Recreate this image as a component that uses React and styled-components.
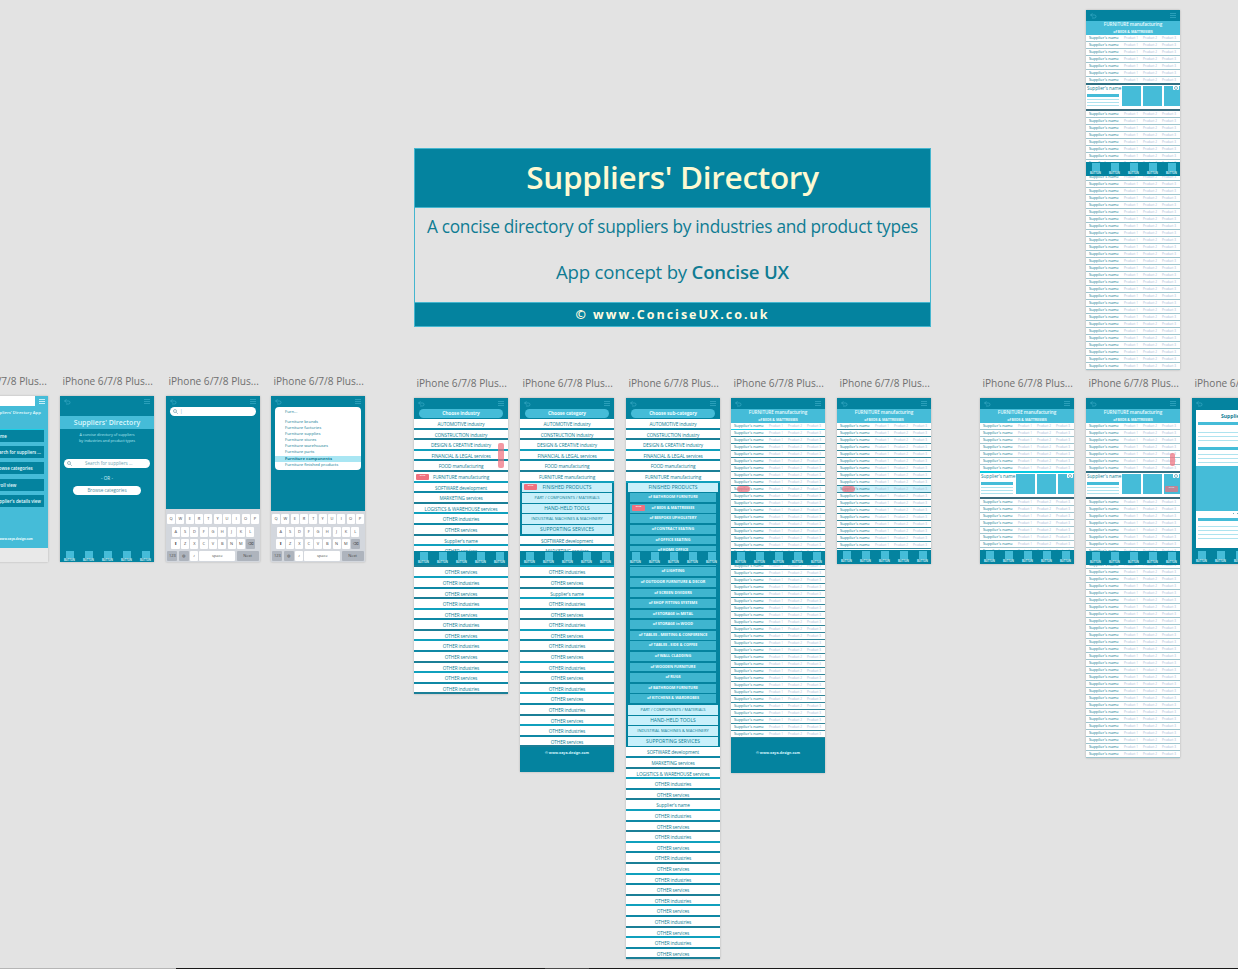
import React from 'react'
import styled, { createGlobalStyle } from 'styled-components'

const TEAL = '#04839f'
const LIGHT = '#45bcd8'
const PALE = '#c8f0fb'
const INK = '#0f7c93'
const LINE = '#aee3ef'

const GlobalStyle = createGlobalStyle`
  html, body {
    margin: 0;
    height: 100%;
    overflow: hidden;
    background: #e3e3e3;
  }
`

const Canvas = styled.div`
  position: relative;
  width: 1238px;
  height: 969px;
  overflow: hidden;
  background: #e3e3e3;
  font-family: "Open Sans", "Noto Sans", sans-serif;
`

// window edge along the bottom of the shot
const BottomEdge = styled.div`
  position: absolute;
  left: 0;
  right: 0;
  bottom: 0;
  height: 1px;
  display: flex;
`
const EdgePart = styled.div`
  width: ${p => p.$w}px;
  flex: ${p => p.$w ? 'none' : 1};
  background: ${p => p.$c};
`

// the title board
const TitleCard = styled.div`
  position: absolute;
  left: 414px;
  top: 148px;
  width: 517px;
  height: 179px;
  box-sizing: border-box;
  border: 1px solid #45b6cf;
  display: flex;
  flex-direction: column;
`
const TitleHead = styled.div`
  height: 59px;
  flex: none;
  box-sizing: border-box;
  padding-bottom: 3px;
  background: ${TEAL};
  color: #fdf9d2;
  font-size: 31.5px;
  font-weight: 600;
  letter-spacing: -0.3px;
  display: flex;
  align-items: center;
  justify-content: center;
  border-bottom: 1px solid #45b6cf;
`
const TitleBody = styled.div`
  flex: 1;
  color: ${INK};
  font-size: 17.3px;
  line-height: 24px;
  letter-spacing: -0.3px;
  white-space: nowrap;
  display: flex;
  flex-direction: column;
  align-items: center;
  gap: 21px;
  padding-top: 7px;
  b { font-weight: 600; }
`
const ConceptLine = styled.span`
  font-size: 18.6px;
  letter-spacing: -0.2px;
`
const TitleFoot = styled.div`
  height: 23px;
  flex: none;
  background: ${TEAL};
  color: #fffbe0;
  font-size: 12.5px;
  font-weight: 700;
  letter-spacing: 2px;
  display: flex;
  align-items: center;
  justify-content: center;
  border-top: 1px solid #45b6cf;
`

// artboards sit on a free canvas, like in the design tool
const Artboard = styled.div`
  position: absolute;
  left: ${p => p.$x}px;
  top: ${p => p.$y}px;
  width: 94px;
`
const BoardLabel = styled.div`
  height: 15px;
  margin-bottom: 6px;
  padding-left: 2.5px;
  font-size: 10.1px;
  line-height: 12px;
  color: #6f6f6f;
  white-space: nowrap;
`
const Phone = styled.div`
  position: relative;
  width: 94px;
  min-height: ${p => p.$h || 0}px;
  background: ${p => p.$bg || '#fff'};
  box-shadow: 0 0 2px rgba(0, 0, 0, 0.22);
  display: flex;
  flex-direction: column;
`
const TopBar = styled.div`
  height: 11px;
  flex: none;
  background: ${TEAL};
  display: flex;
  align-items: center;
  justify-content: space-between;
  padding: 0 4px;
`
const PillWrap = styled.div`
  height: 10px;
  flex: none;
  background: ${TEAL};
  padding: 0 5px;
  box-sizing: border-box;
`
const Pill = styled.div`
  height: 9px;
  border-radius: 5px;
  background: ${LIGHT};
  color: #eafcff;
  font-size: 4.8px;
  font-weight: 700;
  letter-spacing: -0.1px;
  line-height: 9px;
  text-align: center;
`
const Row = styled.div`
  height: 10.6px;
  flex: none;
  box-sizing: border-box;
  background: #fff;
  border-bottom: 2px solid ${p => p.$line || '#0f88a5'};
  color: ${INK};
  font-size: 4.7px;
  letter-spacing: -0.1px;
  line-height: 10px;
  text-align: center;
  white-space: nowrap;
  overflow: hidden;
`
const Group = styled.div`
  background: ${TEAL};
  padding: 0 2px;
  display: flex;
  flex-direction: column;
`
const PaleRow = styled.div`
  height: 9.5px;
  margin-bottom: 1.1px;
  background: ${PALE};
  color: ${INK};
  font-size: ${p => p.$small ? 4 : 5}px;
  line-height: 9.5px;
  text-align: center;
  white-space: nowrap;
  flex: none;
`
const SubRow = styled.div`
  height: 8.8px;
  margin: 0 2px 1.8px;
  background: #3fb5cf;
  color: #f2fdff;
  font-size: 3.8px;
  font-weight: 700;
  line-height: 8.8px;
  text-align: center;
  white-space: nowrap;
  flex: none;
`
const Badge = styled.div`
  position: absolute;
  left: ${p => p.$x}px;
  top: ${p => p.$y}px;
  width: ${p => p.$w || 13}px;
  height: ${p => p.$h || 6}px;
  background: #f0707e;
  color: #fff;
  border-radius: ${p => p.$round || 1}px;
  font-size: 2.4px;
  font-weight: 700;
  line-height: 3px;
  text-align: center;
  overflow: hidden;
  z-index: 3;
  opacity: ${p => p.$soft ? 0.72 : 1};
`
const Nav = styled.div`
  position: absolute;
  left: 0;
  right: 0;
  top: ${p => p.$y}px;
  height: ${p => p.$h || 14}px;
  background: ${TEAL};
  display: grid;
  grid-template-columns: repeat(5, 19px);
  padding-top: 1px;
  box-sizing: border-box;
  z-index: 2;
`
const NavItem = styled.div`
  display: flex;
  flex-direction: column;
  align-items: center;
  color: #d6f6ff;
  font-size: 2.6px;
  font-weight: 700;
  line-height: 4px;
  i {
    display: block;
    flex: none;
    width: 8px;
    height: ${p => p.$tile}px;
    background: ${LIGHT};
  }
`
const PhoneFoot = styled.div`
  height: ${p => p.$h}px;
  flex: none;
  background: ${TEAL};
  color: #d9f7ff;
  font-size: 3.6px;
  font-weight: 700;
  text-align: center;
  padding-top: ${p => p.$pad || 3}px;
  box-sizing: border-box;
`

// supplier lists
const SupplierHead = styled.div`
  height: 14px;
  flex: none;
  background: ${LIGHT};
  color: #eafcff;
  font-weight: 600;
  text-align: center;
  font-size: 4.6px;
  letter-spacing: -0.05px;
  line-height: 7px;
  b { display: block; font-size: 3.6px; font-weight: 700; }
`
const SupplierRow = styled.div`
  height: 7px;
  flex: none;
  box-sizing: border-box;
  background: ${p => p.$on ? '#cdf1fb' : '#fff'};
  border-bottom: 1px solid ${p => p.$cyan ? '#19cfe8' : p.$soft ? '#9cc3cc' : '#2f8598'};
  display: grid;
  grid-template-columns: 35px 19px 19px 1fr;
  padding-left: 3px;
  font-size: 4.1px;
  letter-spacing: -0.05px;
  line-height: 6px;
  color: ${INK};
  white-space: nowrap;
  overflow: hidden;
  span { color: #a3b9d4; font-size: 3.1px; letter-spacing: 0; }
`
const DetailCard = styled.div`
  position: relative;
  height: 28px;
  flex: none;
  margin-top: -1px;
  box-sizing: border-box;
  background: #fff;
  border-top: 2px solid ${p => p.$dark ? '#2f6f82' : '#06c8e0'};
  border-bottom: 2px solid #3c6c7d;
  display: flex;
  overflow: hidden;
`
const DetailText = styled.div`
  width: 34px;
  flex: none;
  box-sizing: border-box;
  padding: 0 1px;
  color: ${INK};
  font-size: 4.6px;
  line-height: 7px;
  white-space: nowrap;
  display: flex;
  flex-direction: column;
  gap: 2px;
`
const Bar = styled.div`
  height: ${p => p.$h || 1}px;
  margin-bottom: ${p => p.$mb || 0}px;
  background: ${p => p.$c || LINE};
  flex: none;
`
const Thumb = styled.div`
  width: 19px;
  height: 19.5px;
  margin: 1px 0 0 2px;
  flex: none;
  background: ${LIGHT};
`
const PinDot = styled.div`
  position: absolute;
  right: 1px;
  top: 0;
  width: 6px;
  height: 5px;
  background: #fff;
  border-radius: 1px;
  &::after {
    content: '';
    display: block;
    width: 2px;
    height: 2px;
    margin: 1px auto;
    border: 0.5px solid #7fb8c6;
    border-radius: 50%;
  }
`

// intro screens
const Slab = styled.div`
  margin-top: 9px;
  height: 13px;
  background: ${LIGHT};
  color: #dcf7fc;
  font-size: 7px;
  font-weight: 600;
  line-height: 13px;
  text-align: center;
`
const Blurb = styled.div`
  margin-top: 3px;
  color: #b4e8f2;
  font-size: 3.8px;
  line-height: 6px;
  text-align: center;
`
const SearchBox = styled.div`
  height: 9px;
  margin: ${p => p.$top || 0}px 4px 0;
  background: #fff;
  border-radius: 5px;
  color: #6fa5b4;
  font-size: 4.6px;
  line-height: 9px;
  white-space: nowrap;
  display: flex;
  align-items: center;
  gap: ${p => p.$gap || 2}px;
  padding-left: 3px;
`
const OrText = styled.div`
  margin: 7px 0 5px;
  color: #d4f3fa;
  font-size: 4.6px;
  line-height: 6px;
  text-align: center;
`
const BrowseBtn = styled.div`
  height: 9px;
  margin: 0 13px;
  background: #fff;
  border-radius: 5px;
  color: #52909f;
  font-size: 4.6px;
  line-height: 9px;
  text-align: center;
`
const Keyboard = styled.div`
  position: absolute;
  left: 0;
  right: 0;
  bottom: 0;
  height: ${p => p.$h}px;
  background: #d3d7dd;
  display: flex;
  flex-direction: column;
  justify-content: flex-end;
  gap: 2.2px;
  padding-bottom: 1px;
  box-sizing: border-box;
`
const KeyRow = styled.div`
  display: flex;
  justify-content: center;
  gap: 1.3px;
`
const Key = styled.div`
  width: ${p => p.$w || 8}px;
  height: 10px;
  background: ${p => p.$dim ? '#aeb4bd' : '#fff'};
  border-radius: 1px;
  color: #4a4a4a;
  font-size: 4px;
  line-height: 10px;
  text-align: center;
  overflow: hidden;
`
const Dropdown = styled.div`
  margin: 0 4px;
  background: #fff;
  border-radius: 4px;
  height: 63px;
  padding-top: 1.5px;
  box-sizing: border-box;
  color: ${INK};
  font-size: 4.2px;
  line-height: 6px;
`
const DropItem = styled.div`
  padding-left: 10px;
  margin-bottom: ${p => p.$gap || 0}px;
  background: ${p => p.$on ? '#a9e6f3' : 'transparent'};
  font-weight: ${p => p.$on ? 700 : 400};
  white-space: nowrap;
`
const MenuPanel = styled.div`
  background: ${LIGHT};
  display: flex;
  flex-direction: column;
  align-items: flex-end;
  height: 152px;
`
const MenuTop = styled.div`
  height: 10px;
  width: 100%;
  flex: none;
  background: #fff;
  display: flex;
  justify-content: flex-end;
  div { width: 13px; background: ${LIGHT}; display: flex; align-items: center; justify-content: center; }
`
const MenuTitle = styled.div`
  width: 100%;
  height: 24px;
  flex: none;
  padding-left: 38px;
  box-sizing: border-box;
  color: #eafcff;
  font-size: 4.2px;
  font-weight: 600;
  line-height: 14px;
  white-space: nowrap;
`
const MenuItem = styled.div`
  width: 90px;
  height: 12px;
  flex: none;
  margin: 0 4px 4.2px 0;
  padding-left: 40px;
  box-sizing: border-box;
  background: ${TEAL};
  color: #eafcff;
  font-size: 4.4px;
  font-weight: 600;
  line-height: 12px;
  white-space: nowrap;
  overflow: hidden;
  box-shadow: ${p => p.$first ? '0 -1px 0 #19cfe8' : 'none'};
`
const MenuCredit = styled.div`
  width: 100%;
  padding: 26px 0 0 42px;
  box-sizing: border-box;
  color: #eafcff;
  font-size: 3px;
  font-weight: 700;
  white-space: nowrap;
`

// supplier detail screen
const DetailSheet = styled.div`
  margin: 1px 0 0 4px;
  height: 138px;
  background: #fff;
  display: flex;
  flex-direction: column;
  padding: 1px 2px 0;
  box-sizing: border-box;
  color: ${INK};
`
const SheetTitle = styled.div`
  font-size: 5px;
  font-weight: 700;
  line-height: 10px;
  text-align: center;
  white-space: nowrap;
`
const SheetBlock = styled.div`
  margin-top: ${p => p.$top || 0}px;
  display: flex;
  flex-direction: column;
  gap: 3px;
`
const Photo = styled.div`
  height: 45px;
  margin: 3px -2px 0;
  background: ${LIGHT};
  flex: none;
`
const Dots = styled.div`
  display: flex;
  justify-content: center;
  gap: 3px;
  margin-top: 2px;
  i { width: 1px; height: 1px; background: #6fa6b4; display: block; }
`

const Back = () => (
  <svg width="7" height="6" viewBox="0 0 14 12" fill="none" stroke="#35a6c2" strokeWidth="1.6">
    <path d="M5 1 1 4l4 3M1 4h8a3 3 0 0 1 0 6H4" />
  </svg>
)
const Burger = ({ color = '#35a6c2' }) => (
  <svg width="6" height="5" viewBox="0 0 12 10" fill="none" stroke={color} strokeWidth="1.6">
    <path d="M0 1h12M0 5h12M0 9h12" />
  </svg>
)
const Lens = () => (
  <svg width="5" height="5" viewBox="0 0 10 10" fill="none" stroke="#5a8f9e" strokeWidth="1.2" style={{ flex: 'none' }}>
    <circle cx="4" cy="4" r="3" />
    <path d="m6.5 6.5 3 3" />
  </svg>
)

const Bar0 = () => (
  <TopBar><Back /><Burger /></TopBar>
)
const NavBar = ({ y, h, tile = 8 }) => (
  <Nav $y={y} $h={h}>
    {[0, 1, 2, 3, 4].map(i => <NavItem key={i} $tile={tile}><i />BUTTON</NavItem>)}
  </Nav>
)

const industries = [
  'AUTOMOTIVE industry', 'CONSTRUCTION industry', 'DESIGN & CREATIVE industry', 'FINANCIAL & LEGAL services',
  'FOOD manufacturing', 'FURNITURE manufacturing',
]
const afterFurniture = ['SOFTWARE development', 'MARKETING services', 'LOGISTICS & WAREHOUSE services']
const others = n => Array.from({ length: n }, (_, i) => i % 2 ? 'OTHER services' : 'OTHER industries')
const lineColor = i => ['#0f88a5', '#1b7f97', '#10a0bd'][i % 3]

const rows = list => list.map((t, i) => <Row key={t + i} $line={lineColor(i)}>{t}</Row>)

const parts = [
  ['FINISHED PRODUCTS', false], ['PART / COMPONENTS / MATERIALS', true], ['HAND-HELD TOOLS', false],
  ['INDUSTRIAL MACHINES & MACHINERY', true], ['SUPPORTING SERVICES', false],
]
const subs = [
  'of BATHROOM FURNITURE', 'of BEDS & MATTRESSES', 'of BESPOKE UPHOLSTERY', 'of CONTRACT SEATING', 'of OFFICE SEATING',
  'of HOME OFFICE', 'of KITCHEN FURNITURE', 'of LIGHTING', 'of OUTDOOR FURNITURE & DECOR', 'of SCREEN DIVIDERS',
  'of SHOP FITTING SYSTEMS', 'of STORAGE in METAL', 'of STORAGE in WOOD', 'of TABLES - MEETING & CONFERENCE',
  'of TABLES - SIDE & COFFEE', 'of WALL CLADDING', 'of WOODEN FURNITURE', 'of RUGS', 'of BATHROOM FURNITURE',
  'of KITCHENS & WARDROBES',
]
const tail = [...afterFurniture, 'OTHER industries', 'OTHER services', "Supplier's name", ...others(14)]

const Suppliers = ({ count, cyan, on, soft }) => Array.from({ length: count }, (_, i) => (
  <SupplierRow key={i} $cyan={cyan === i} $on={on === i} $soft={soft}>
    Supplier's name<span>Product 1</span><span>Product 2</span><span>Product 3</span>
  </SupplierRow>
))

const Detail = ({ dark }) => (
  <DetailCard $dark={dark}>
    <DetailText>
      Supplier's name
      <Bar $h={3} $c={LIGHT} />
      <Bar /><Bar /><Bar />
    </DetailText>
    <Thumb /><Thumb /><Thumb />
    <PinDot />
  </DetailCard>
)

const SupplierTop = () => (
  <>
    <Bar0 />
    <SupplierHead>FURNITURE manufacturing<b>of BEDS & MATTRESSES</b></SupplierHead>
  </>
)

const KeyboardPanel = ({ h }) => (
  <Keyboard $h={h}>
    <KeyRow>{'QWERTYUIOP'.split('').map(k => <Key key={k}>{k}</Key>)}</KeyRow>
    <KeyRow>{'ASDFGHJKL'.split('').map(k => <Key key={k}>{k}</Key>)}</KeyRow>
    <KeyRow>
      <Key $w={9}>⬆</Key>
      {'ZXCVBNM'.split('').map(k => <Key key={k}>{k}</Key>)}
      <Key $w={9} $dim>⌫</Key>
    </KeyRow>
    <KeyRow>
      <Key $w={10} $dim>123</Key>
      <Key $w={10} $dim>◍</Key>
      <Key $w={8}>♪</Key>
      <Key $w={36}>space</Key>
      <Key $w={22} $dim>Next</Key>
    </KeyRow>
  </Keyboard>
)

const Label = () => <BoardLabel>iPhone 6/7/8 Plus...</BoardLabel>

export default function App() {
  return (
    <Canvas>
      <GlobalStyle />

      <TitleCard>
        <TitleHead>Suppliers' Directory</TitleHead>
        <TitleBody>
          <span>A concise directory of suppliers by industries and product types</span>
          <ConceptLine>App concept by <b>Concise UX</b></ConceptLine>
        </TitleBody>
        <TitleFoot>© www.ConciseUX.co.uk</TitleFoot>
      </TitleCard>

      <Artboard $x={-46} $y={375}>
        <Label />
        <Phone $h={166} $bg="#e9e9e9">
          <MenuPanel>
            <MenuTop><div><Burger color="#e6fbff" /></div></MenuTop>
            <MenuTitle>Suppliers' Directory App</MenuTitle>
            <MenuItem $first>Home</MenuItem>
            <MenuItem>Search for suppliers ...</MenuItem>
            <MenuItem>Browse categories</MenuItem>
            <MenuItem>Scroll view</MenuItem>
            <MenuItem>Supplier's details view</MenuItem>
            <MenuCredit>© www.xaya-design.com</MenuCredit>
          </MenuPanel>
        </Phone>
      </Artboard>

      <Artboard $x={60} $y={375}>
        <Label />
        <Phone $h={166} $bg={TEAL}>
          <Bar0 />
          <Slab>Suppliers' Directory</Slab>
          <Blurb>A concise directory of suppliers<br />by industries and product types</Blurb>
          <SearchBox $top={15} $gap={13}><Lens />Search for suppliers ...</SearchBox>
          <OrText>- OR -</OrText>
          <BrowseBtn>Browse categories</BrowseBtn>
          <NavBar y={154} h={12} tile={7} />
        </Phone>
      </Artboard>

      <Artboard $x={166} $y={375}>
        <Label />
        <Phone $h={166} $bg={TEAL}>
          <Bar0 />
          <SearchBox><Lens />|</SearchBox>
          <KeyboardPanel h={53} />
        </Phone>
      </Artboard>

      <Artboard $x={271} $y={375}>
        <Label />
        <Phone $h={166} $bg={TEAL}>
          <Bar0 />
          <Dropdown>
            <DropItem $gap={4}>Furn...</DropItem>
            <DropItem>Furniture brands</DropItem>
            <DropItem>Furniture factories</DropItem>
            <DropItem>Furniture supplies</DropItem>
            <DropItem>Furniture stores</DropItem>
            <DropItem>Furniture warehouses</DropItem>
            <DropItem $gap={1}>Furniture parts</DropItem>
            <DropItem $on>Furniture components</DropItem>
            <DropItem>Furniture finished products</DropItem>
          </Dropdown>
          <KeyboardPanel h={51} />
        </Phone>
      </Artboard>

      <Artboard $x={414} $y={377}>
        <Label />
        <Phone>
          <Bar0 />
          <PillWrap><Pill>Choose industry</Pill></PillWrap>
          {rows([...industries, ...afterFurniture, 'OTHER industries', 'OTHER services', "Supplier's name", ...others(14).reverse()])}
          <NavBar y={153} />
          <Badge $x={2} $y={76}>SALE</Badge>
          <Badge $x={84} $y={45} $w={6} $h={25} $round={2} $soft />
        </Phone>
      </Artboard>

      <Artboard $x={520} $y={377}>
        <Label />
        <Phone>
          <Bar0 />
          <PillWrap><Pill>Choose category</Pill></PillWrap>
          {rows(industries)}
          <Group>
            {parts.map(([t, small]) => <PaleRow key={t} $small={small}>{t}</PaleRow>)}
          </Group>
          {rows(tail)}
          <PhoneFoot $h={25}>© www.xaya-design.com</PhoneFoot>
          <NavBar y={153} />
          <Badge $x={4} $y={86}>SALE</Badge>
        </Phone>
      </Artboard>

      <Artboard $x={626} $y={377}>
        <Label />
        <Phone>
          <Bar0 />
          <PillWrap><Pill>Choose sub-category</Pill></PillWrap>
          {rows(industries)}
          <Group>
            <PaleRow>FINISHED PRODUCTS</PaleRow>
            {subs.map((t, i) => <SubRow key={i}>{t}</SubRow>)}
            {parts.slice(1).map(([t, small]) => <PaleRow key={t} $small={small}>{t}</PaleRow>)}
          </Group>
          {rows(tail)}
          <NavBar y={153} />
          <Badge $x={6} $y={107}>SALE</Badge>
        </Phone>
      </Artboard>

      <Artboard $x={731} $y={377}>
        <Label />
        <Phone>
          <SupplierTop />
          <Suppliers count={45} cyan={0} />
          <PhoneFoot $h={35} $pad={12}>© www.xaya-design.com</PhoneFoot>
          <NavBar y={153} />
          <Badge $x={6} $y={88} $round={3} $soft />
        </Phone>
      </Artboard>

      <Artboard $x={837} $y={377}>
        <Label />
        <Phone $h={166}>
          <SupplierTop />
          <Suppliers count={20} on={9} />
          <NavBar y={152} />
          <Badge $x={5} $y={88} $round={3} $soft />
        </Phone>
      </Artboard>

      <Artboard $x={980} $y={377}>
        <Label />
        <Phone $h={166}>
          <SupplierTop />
          <Suppliers count={7} soft />
          <Detail />
          <Suppliers count={9} soft />
          <NavBar y={152} />
        </Phone>
      </Artboard>

      <Artboard $x={1086} $y={377}>
        <Label />
        <Phone>
          <SupplierTop />
          <Suppliers count={7} soft />
          <Detail dark />
          <Suppliers count={37} soft />
          <NavBar y={153} />
          <Badge $x={84} $y={55} $w={5} $h={13} $round={2} $soft />
          <Badge $x={79} $y={88} $soft>SALE</Badge>
        </Phone>
      </Artboard>

      <Artboard $x={1192} $y={377}>
        <Label />
        <Phone $h={166} $bg={TEAL}>
          <Bar0 />
          <DetailSheet>
            <SheetTitle>Supplier's name</SheetTitle>
            <SheetBlock $top={1}>
              <Bar $h={3} $c={LIGHT} $mb={4} />
              <Bar /><Bar /><Bar />
            </SheetBlock>
            <SheetBlock $top={6}>
              <Bar $h={3} $c={LIGHT} $mb={1} />
              <Bar /><Bar /><Bar />
            </SheetBlock>
            <Photo />
            <Dots><i /><i /><i /><i /><i /></Dots>
            <SheetBlock $top={4}>
              <Bar $h={3} $c={LIGHT} $mb={2} />
              <Bar /><Bar /><Bar /><Bar />
            </SheetBlock>
          </DetailSheet>
          <NavBar y={152} />
        </Phone>
      </Artboard>

      <Artboard $x={1086} $y={-11}>
        <Label />
        <Phone>
          <SupplierTop />
          <Suppliers count={7} soft />
          <Detail dark />
          <Suppliers count={37} soft />
          <NavBar y={152} />
        </Phone>
      </Artboard>

      <BottomEdge>
        <EdgePart $w={176} $c="#b5b5b5" />
        <EdgePart $w={369} $c="#1a1a1a" />
        <EdgePart $w={44} $c="#4a4a4a" />
        <EdgePart $c="#1a1a1a" />
      </BottomEdge>
    </Canvas>
  )
}
